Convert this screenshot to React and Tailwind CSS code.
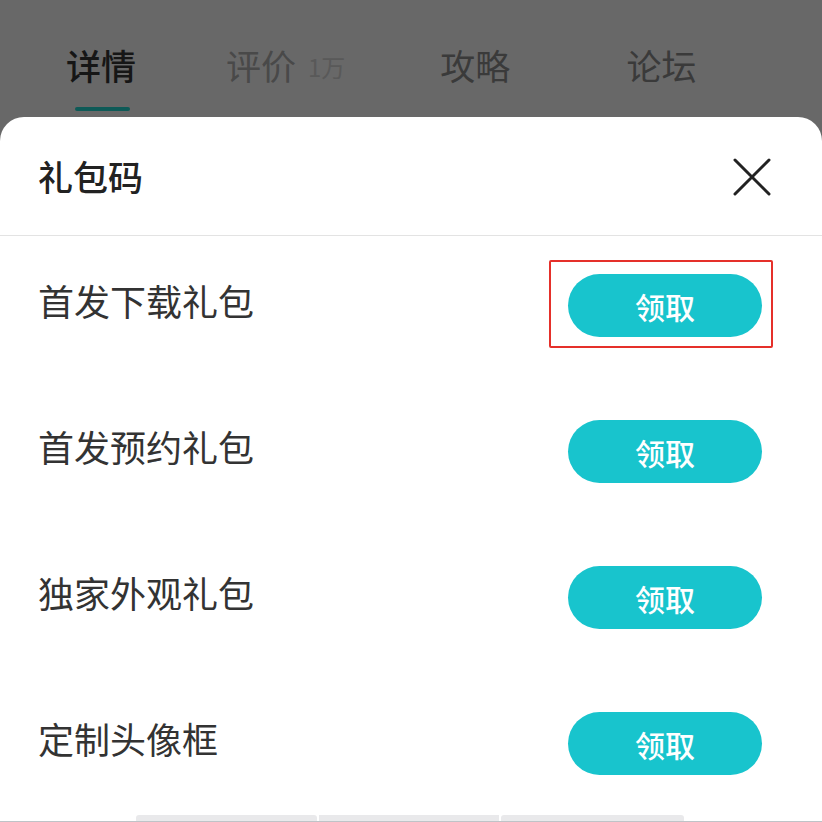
const gifts = ["首发下载礼包", "首发预约礼包", "独家外观礼包", "定制头像框"];

const CloseIcon = () => (
  <svg width="38" height="38" viewBox="0 0 38 38" fill="none">
    <path d="M2 2L36 36M36 2L2 36" stroke="#222" strokeWidth="3" strokeLinecap="round" />
  </svg>
);

export default function App() {
  return (
    <div
      className="w-[822px] h-[822px] bg-[#686868] flex flex-col overflow-hidden"
      style={{ fontFamily: '"Noto Sans CJK SC", "Noto Sans", sans-serif' }}
    >
      {/* Tabs behind the mask */}
      <div className="h-[117px] flex flex-col">
        <div className="flex items-end pl-[66px] pt-[39px] h-[87px]">
          <span className="text-[35px] leading-[44px] font-medium text-[#161616]">详情</span>
          <span className="ml-[90px] text-[35px] leading-[44px] text-[#494949]">评价</span>
          <span className="ml-[12px] text-[24px] leading-[40px] text-[#595959]">1万</span>
          <span className="ml-[95px] text-[35px] leading-[44px] text-[#3a3a3a]">攻略</span>
          <span className="ml-[116px] text-[35px] leading-[44px] text-[#3a3a3a]">论坛</span>
        </div>
        <div className="ml-[75px] mt-[20px] w-[55px] h-[4px] rounded-full bg-[#0e5a57]" />
      </div>

      {/* Bottom sheet */}
      <div className="flex-1 bg-white rounded-t-[24px] flex flex-col">
        <div className="h-[119px] flex items-center justify-between pl-[38px] pr-[51px] border-b border-[#e3e3e3]">
          <span className="text-[35px] leading-none font-medium text-[#222] -mt-[1px]">礼包码</span>
          <span className="mt-[2px]">
            <CloseIcon />
          </span>
        </div>

        <div className="flex flex-col gap-[83px] pt-[38px] pl-[38px] pr-[60px]">
          {gifts.map((name, i) => (
            <div key={name} className="h-[63px] flex items-center justify-between">
              <span className="text-[36px] leading-none text-[#333] pb-[12px]">{name}</span>
              <div className="relative">
                {i === 0 && (
                  <div className="absolute -left-[19px] -top-[14px] -right-[11px] -bottom-[11px] border-2 border-[#e5302a] rounded-[2px]" />
                )}
                <button className="w-[194px] h-[63px] rounded-full bg-[#18c4cd] text-white text-[30px] font-medium leading-none">
                  领取
                </button>
              </div>
            </div>
          ))}
        </div>

        <div className="mt-auto flex flex-col">
          <div className="flex pl-[136px] gap-[2px]">
            <div className="w-[181px] h-[6px] rounded-t-[3px] bg-[#e9e9eb]" />
            <div className="w-[180px] h-[6px] bg-[#e9e9eb]" />
            <div className="w-[183px] h-[6px] rounded-t-[3px] bg-[#e9e9eb]" />
          </div>
          <div className="h-[1px] bg-[#bfc3c7]" />
        </div>
      </div>
    </div>
  );
}
